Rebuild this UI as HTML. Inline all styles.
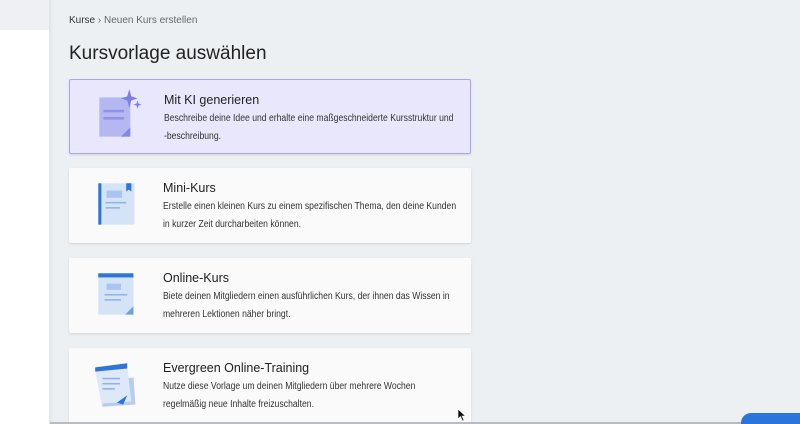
<!DOCTYPE html>
<html style="overflow:hidden;width:800px;height:424px"><head><meta charset="utf-8"><style>
*{margin:0;padding:0;box-sizing:border-box}
body{width:800px;height:424px;overflow:hidden;background:#edf0f3;font-family:"Liberation Sans",sans-serif;position:relative;color:#222}
.side{position:absolute;left:0;top:0;width:50px;height:424px;background:#fff;border-right:1px solid #e3e5e8;box-shadow:1px 0 3px rgba(0,0,0,.06)}
.side .top{height:30px;background:#eef0f3}
.crumb{position:absolute;left:69px;top:15px;font-size:10px;color:#666}
.crumb b{color:#333;font-weight:normal}
h1{position:absolute;left:69px;top:43px;font-size:19px;font-weight:normal;color:#222}
.card{position:absolute;left:69px;width:402px;height:75px;background:#fafafa;border-radius:2px;box-shadow:0 1px 2px rgba(0,0,0,.12)}
.card.ai{background:#e9e7fb;border:1px solid #a7a6ee}
.card .t{position:absolute;left:94px;top:13px;font-size:12.5px;color:#222}
.card .d{position:absolute;left:94px;top:30px;font-size:9.8px;line-height:18px;color:#333;white-space:nowrap;transform:scaleX(.88);transform-origin:0 0}
.card svg{position:absolute;left:20px;top:6px}
.bline{position:absolute;left:50px;top:422px;width:750px;height:2px;background:#b8bcc2}
.btn{position:absolute;left:741px;top:413px;width:70px;height:11px;background:#2a74db;border-radius:10px 10px 0 0}
</style></head><body>
<div class="side"><div class="top"></div></div>
<div class="crumb"><b>Kurse</b> › Neuen Kurs erstellen</div>
<h1>Kursvorlage auswählen</h1>

<div class="card ai" style="top:79px">
<svg width="62" height="62" viewBox="0 0 60 60"><rect x="9" y="11" width="30" height="38" fill="#b5b8f0"/><path d="M30 49 L39 40 L39 49Z" fill="#8587e6"/><rect x="13" y="23" width="20" height="2.5" fill="#8f92ea"/><rect x="13" y="30" width="20" height="2.5" fill="#8f92ea"/><path d="M38 3 L40 10 L46 12 L40 14 L38 21 L36 14 L30 12 L36 10Z" fill="#7c7fe6"/><path d="M46 14 L47 17 L50 18 L47 19 L46 22 L45 19 L42 18 L45 17Z" fill="#7c7fe6"/></svg>
<div class="t">Mit KI generieren</div>
<div class="d">Beschreibe deine Idee und erhalte eine maßgeschneiderte Kursstruktur und<br>-beschreibung.</div></div>

<div class="card" style="top:168px">
<svg width="62" height="62" viewBox="0 0 60 60"><rect x="9" y="9" width="35" height="40" fill="#d5e3f7"/><rect x="9" y="9" width="3" height="40" fill="#2f74d8"/><path d="M36 9 h5 v8 l-2.5 -2 l-2.5 2z" fill="#2f74d8"/><rect x="17" y="16" width="15" height="7" fill="#a9c4ee"/><rect x="16" y="27" width="20" height="1.5" fill="#8fb3e9"/><rect x="16" y="32" width="14" height="1.5" fill="#8fb3e9"/></svg>
<div class="t">Mini-Kurs</div>
<div class="d">Erstelle einen kleinen Kurs zu einem spezifischen Thema, den deine Kunden<br>in kurzer Zeit durcharbeiten können.</div></div>

<div class="card" style="top:258px">
<svg width="62" height="62" viewBox="0 0 60 60"><rect x="9" y="9" width="34" height="40" fill="#d5e3f7"/><rect x="9" y="9" width="34" height="4" fill="#2f74d8"/><path d="M35 49 L43 41 L43 49Z" fill="#6c9fe4"/><rect x="17" y="19" width="14" height="6" fill="#a9c4ee"/><rect x="15" y="29" width="22" height="1.5" fill="#8fb3e9"/><rect x="15" y="34" width="16" height="1.5" fill="#8fb3e9"/></svg>
<div class="t">Online-Kurs</div>
<div class="d">Biete deinen Mitgliedern einen ausführlichen Kurs, der ihnen das Wissen in<br>mehreren Lektionen näher bringt.</div></div>

<div class="card" style="top:348px">
<svg width="62" height="62" viewBox="0 0 60 60"><rect x="12" y="24" width="32" height="26" fill="#b6cdef" transform="rotate(-4 28 37)"/><path d="M6 15 L37 12 L41 46 L12 48Z" fill="#dde8f8"/><path d="M6 13 L37 9 L37 14 L6 17Z" fill="#2f74d8"/><path d="M27 47 L37 40 L33 49Z" fill="#2f74d8"/><rect x="13" y="23" width="17" height="1.5" fill="#8fb3e9"/><rect x="13" y="28" width="17" height="1.5" fill="#8fb3e9"/><rect x="13" y="33" width="12" height="1.5" fill="#8fb3e9"/></svg>
<div class="t">Evergreen Online-Training</div>
<div class="d">Nutze diese Vorlage um deinen Mitgliedern über mehrere Wochen<br>regelmäßig neue Inhalte freizuschalten.</div></div>

<div class="bline"></div>
<div class="btn"></div>
<svg style="position:absolute;left:457px;top:408px" width="10" height="14" viewBox="0 0 10 14"><path d="M1 1 L1 11 L3.5 8.5 L5.5 13 L7 12.3 L5 8 L8.5 8Z" fill="#111" stroke="#fff" stroke-width=".6"/></svg>
</body></html>
